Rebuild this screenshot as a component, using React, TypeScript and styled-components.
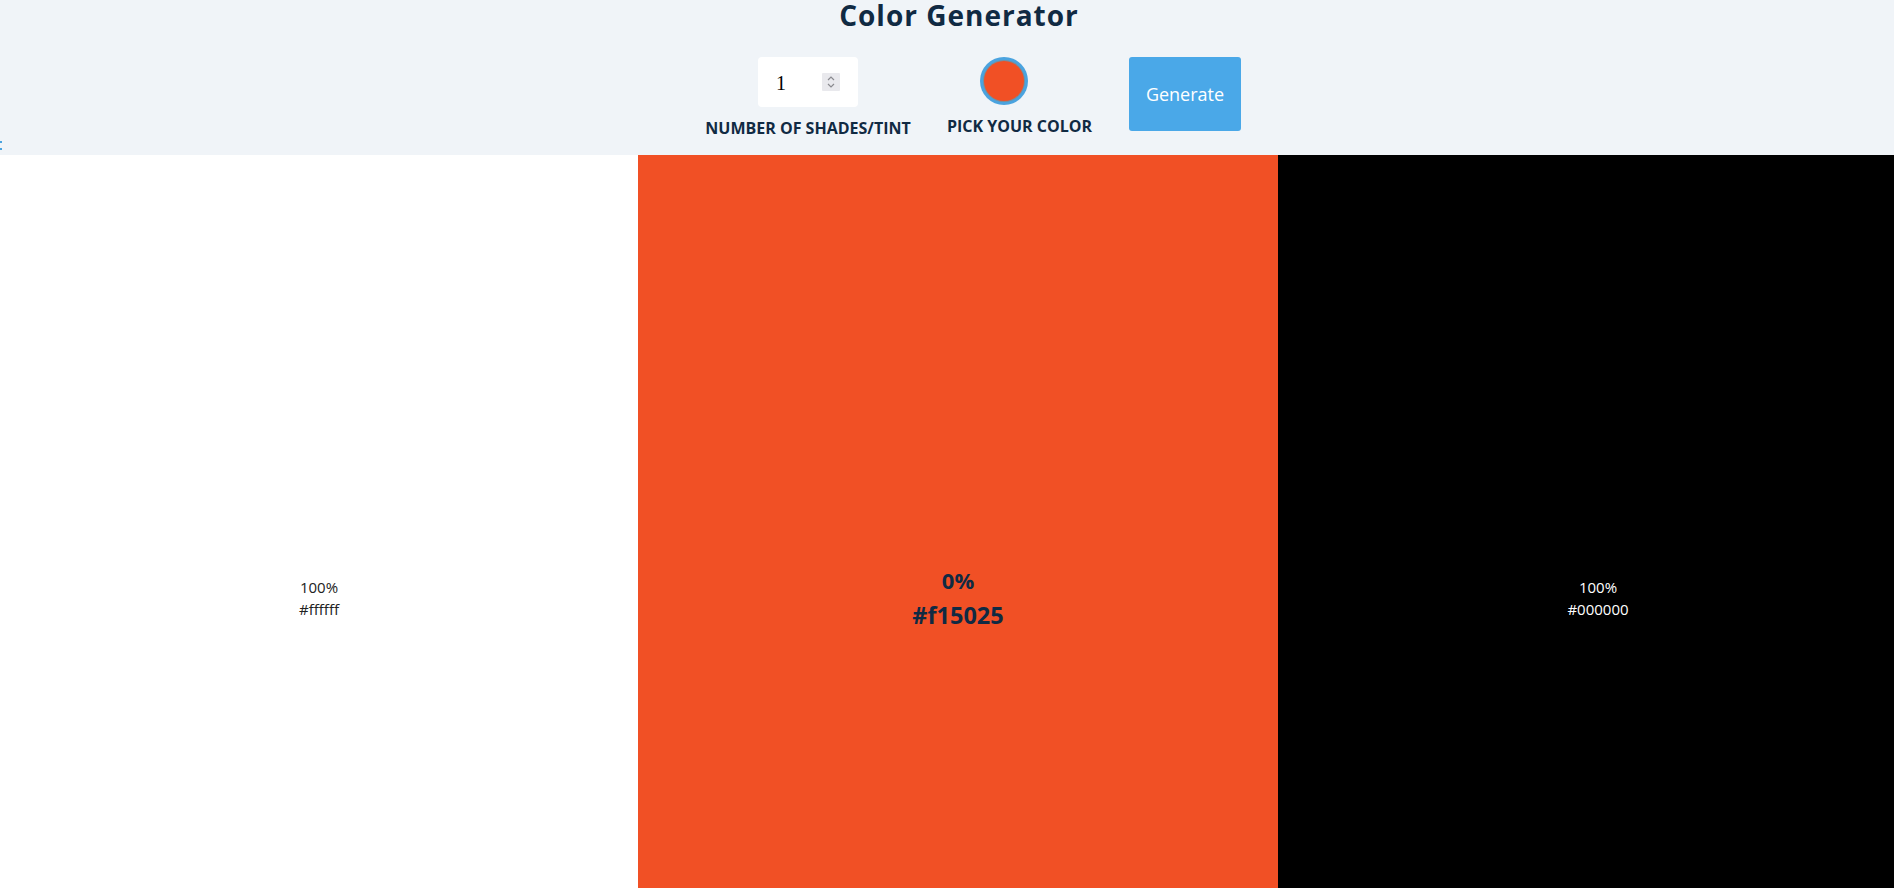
import React, { useState } from "react";
import styled, { createGlobalStyle } from "styled-components";

const GlobalStyle = createGlobalStyle`
  html, body {
    margin: 0;
    padding: 0;
    overflow: hidden;
  }
  body {
    font-family: "Open Sans", "Noto Sans", sans-serif;
    background: #ffffff;
    color: #102a43;
  }
  * { box-sizing: border-box; }
`;

const Page = styled.main`
  width: 1918px;
`;

const Header = styled.header`
  height: 155px;
  background: #f0f4f8;
  display: flex;
  flex-direction: column;
  align-items: center;
`;

const Title = styled.h1`
  margin: 0;
  font-size: 28px;
  line-height: 30px;
  font-weight: 700;
  letter-spacing: 1px;
  color: #102a43;
`;

const Form = styled.form`
  margin-top: 27px;
  display: flex;
  align-items: flex-start;
  padding-left: 30px;
`;

const Field = styled.div<{ $w: number; $gap: number }>`
  width: ${(p) => p.$w}px;
  margin-right: ${(p) => p.$gap}px;
  display: flex;
  flex-direction: column;
  align-items: center;
`;

const Label = styled.label`
  margin-top: 11px;
  font-size: 16px;
  line-height: 20px;
  font-weight: 700;
  white-space: nowrap;
  color: #102a43;
  text-transform: uppercase;
`;

const NumberBox = styled.div`
  width: 100px;
  height: 50px;
  background: #ffffff;
  border-radius: 4px;
  display: flex;
  align-items: center;
  padding: 0 18px 0 18px;
`;

const NumberInput = styled.input`
  flex: 1;
  min-width: 0;
  border: none;
  outline: none;
  background: transparent;
  font-family: "Liberation Serif", "DejaVu Serif", serif;
  font-size: 20px;
  color: #000;
  padding: 0;
  margin-top: 2px;
`;

const Spinner = styled.div`
  width: 18px;
  height: 18px;
  background: #e9e9ed;
  border-radius: 1px;
  display: flex;
  align-items: center;
  justify-content: center;
`;

const ColorRing = styled.div`
  margin-right: 32px;
  width: 48px;
  height: 48px;
  border-radius: 50%;
  background: #4aa3df;
  padding: 4px;
`;

const ColorDot = styled.div<{ $c: string }>`
  width: 100%;
  height: 100%;
  border-radius: 50%;
  background: ${(p) => p.$c};
  box-shadow: 0 0 0 1px #7a8c99;
`;

const Button = styled.button`
  width: 112px;
  height: 74px;
  border: none;
  border-radius: 3px;
  background: #4aa8e8;
  color: #ffffff;
  font-family: "Open Sans", "Noto Sans", sans-serif;
  font-size: 18px;
  cursor: pointer;
  padding: 0;
`;

const MarkRow = styled.div`
  align-self: stretch;
  margin-top: 3px;
  display: flex;
  flex-direction: column;
  gap: 5px;
`;

const Mark = styled.span`
  display: block;
  width: 2px;
  height: 2px;
  background: #4aa3df;
`;

const Grid = styled.section`
  display: grid;
  grid-template-columns: 638px 640px 640px;
`;

const Swatch = styled.article<{ $bg: string; $fg: string; $base?: boolean }>`
  height: 886px;
  background: ${(p) => p.$bg};
  color: ${(p) => p.$fg};
  display: flex;
  flex-direction: column;
  align-items: center;
  justify-content: center;
  font-size: 15px;
  font-weight: ${(p) => (p.$base ? 700 : 400)};
  line-height: ${(p) => (p.$base ? "35px" : "22.5px")};
`;

const SwatchText = styled.p<{ $size?: number }>`
  margin: 0;
  font-size: ${(p) => (p.$size ? `${p.$size}px` : "inherit")};
`;

const colors = [
  { weight: 100, hex: "#ffffff", bg: "#ffffff", fg: "#222222", base: false },
  { weight: 0, hex: "#f15025", bg: "#f15025", fg: "#102a43", base: true },
  { weight: 100, hex: "#000000", bg: "#000000", fg: "#ffffff", base: false },
];

export default function App() {
  const [count, setCount] = useState("1");
  return (
    <Page>
      <GlobalStyle />
      <Header>
        <Title>Color Generator</Title>
        <Form onSubmit={(e) => e.preventDefault()}>
          <Field $w={202} $gap={41}>
            <NumberBox>
              <NumberInput value={count} onChange={(e) => setCount(e.target.value)} />
              <Spinner>
                <svg width="10" height="14" viewBox="0 0 10 14" fill="none" stroke="#8a8a8f" strokeWidth="1.2">
                  <path d="M2 5 L5 2 L8 5" />
                  <path d="M2 9 L5 12 L8 9" />
                </svg>
              </Spinner>
            </NumberBox>
            <Label>Number of shades/tint</Label>
          </Field>
          <Field $w={139} $gap={40}>
            <ColorRing>
              <ColorDot $c="#f15025" />
            </ColorRing>
            <Label>Pick your color</Label>
          </Field>
          <Button type="submit">Generate</Button>
        </Form>
        <MarkRow>
          <Mark />
          <Mark />
        </MarkRow>
      </Header>
      <Grid>
        {colors.map((c, i) => (
          <Swatch key={i} $bg={c.bg} $fg={c.fg} $base={c.base}>
            <SwatchText $size={c.base ? 22 : undefined}>{c.weight}%</SwatchText>
            <SwatchText $size={c.base ? 23.5 : undefined}>{c.hex}</SwatchText>
          </Swatch>
        ))}
      </Grid>
    </Page>
  );
}
